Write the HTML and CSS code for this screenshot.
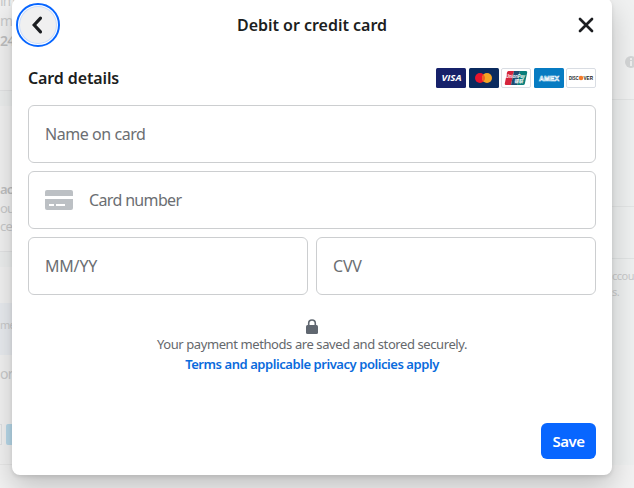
FILE: index.html
```html
<!DOCTYPE html>
<html lang="en">
<head>
    <meta charset="utf-8">
    <title>Debit or credit card</title>
    <meta name="viewport" content="width=device-width, initial-scale=1.0">
    <link rel="stylesheet" href="styles.css">
</head>
<body>
    <!-- Page behind the dialog -->
    <div class="page">
        <div class="page-left">
            <div class="summary">
                <div>im</div>
                <div>m</div>
                <b>24</b>
            </div>
            <div class="divider"></div>
            <div class="account">
                <b>ac</b>
                <div>ou</div>
                <div>ce</div>
            </div>
            <div class="divider"></div>
            <div class="note">me</div>
            <div class="method">or</div>
            <div class="page-logos"><i></i><i class="blue"></i></div>
        </div>
        <div class="page-right">
            <div class="info">
                <svg width="12" height="12" viewBox="0 0 12 12"><circle cx="6" cy="6" r="6" fill="#d3d5d6"/><path d="M5 5h2v5H5zM5 2h2v2H5z" fill="#eee"/></svg>
            </div>
            <div class="line-top"></div>
            <div class="line-bottom"></div>
            <div class="hint">ccou<br>s.</div>
        </div>
    </div>

    <div class="dialog">
        <div class="header">
            <button class="back" aria-label="Back">
                <svg width="36" height="36" viewBox="0 0 36 36" fill="none" stroke="#1c1e21" stroke-width="3.2" stroke-linecap="round"><path d="M20.5 11.2L14.2 18l6.300 6.800"/></svg>
            </button>
            <h1 class="title">Debit or credit card</h1>
            <button class="close" aria-label="Close">
                <svg width="16" height="16" viewBox="0 0 16 16" fill="none" stroke="#1c1e21" stroke-width="2.7" stroke-linecap="round"><path d="M2 2l12 12M14 2L2 14"/></svg>
            </button>
        </div>

        <div class="section-head">
            <h2 class="section-title">Card details</h2>
            <div class="brands">
                <svg width="30" height="20" viewBox="0 0 30 20">
                    <rect width="30" height="20" rx="1.5" fill="#16216a"/>
                    <text x="5.5" y="13" class="visa" textLength="20" lengthAdjust="spacingAndGlyphs">VISA</text>
                </svg>
                <svg width="30" height="20" viewBox="0 0 30 20">
                    <rect width="30" height="20" rx="1.5" fill="#0a2a5e"/>
                    <circle cx="11" cy="10" r="5" fill="#e9152d"/>
                    <circle cx="18" cy="10" r="5" fill="#f3a524"/>
                    <path d="M14.5 6.4a5 5 0 0 1 0 7.2a5 5 0 0 1 0-7.2z" fill="#ee6120"/>
                </svg>
                <svg width="30" height="20" viewBox="0 0 30 20">
                    <rect x=".5" y=".5" width="29" height="19" rx="1.5" fill="#fff" stroke="#d9dde3"/>
                    <path d="M7.5 3H13l-3 14H5q-1.5 0-1.2-1.5L6 4.5Q6.300 3 7.5 3z" fill="#d5243c"/>
                    <path d="M13 3h6l-3 14h-6z" fill="#1d4b70"/>
                    <path d="M19 3h6q1.5 0 1.2 1.5l-2.300 11Q23.600 17 22 17h-6z" fill="#087d7a"/>
                    <text x="5" y="10" class="union" textLength="19" lengthAdjust="spacingAndGlyphs">UnionPay</text>
                    <text x="13" y="15" class="union" textLength="9" lengthAdjust="spacingAndGlyphs">银联</text>
                </svg>
                <svg width="30" height="20" viewBox="0 0 30 20">
                    <rect width="30" height="20" rx="1.5" fill="#067bc2"/>
                    <text x="5" y="12.8" class="amex" textLength="20" lengthAdjust="spacingAndGlyphs">AMEX</text>
                </svg>
                <svg width="30" height="20" viewBox="0 0 30 20">
                    <rect x=".5" y=".5" width="29" height="19" rx="1.5" fill="#fff" stroke="#d9dde3"/>
                    <text x="3" y="12" class="discover" textLength="9.5" lengthAdjust="spacingAndGlyphs">DISC</text>
                    <circle cx="15" cy="10" r="2.3" fill="#f47a2a"/>
                    <text x="17.5" y="12" class="discover" textLength="9.5" lengthAdjust="spacingAndGlyphs">VER</text>
                </svg>
            </div>
        </div>

        <div class="fields">
            <div class="field wide"><span class="w-name">Name on card</span></div>
            <div class="field wide">
                <svg class="card-icon" width="28" height="20" viewBox="0 0 28 20" fill="#bcc0c4">
                    <path d="M2 0h24q2 0 2 2v4H0V2q0-2 2-2z"/>
                    <path d="M0 9h28v9q0 2-2 2H2q-2 0-2-2z"/>
                    <path d="M4 14h5v2H4zM11 14h9v2h-9z" fill="#fff"/>
                </svg>
                <span class="w-number">Card number</span>
            </div>
            <div class="field"><span class="w-date">MM/YY</span></div>
            <div class="field"><span class="w-date">CVV</span></div>
        </div>

        <div class="secure">
            <svg width="12" height="15" viewBox="0 0 12 15"><path d="M2.7 7V4.3a3.3 3.3 0 0 1 6.6 0V7" fill="none" stroke="#606770" stroke-width="1.6"/><rect y="6" width="12" height="9" rx="1.5" fill="#606770"/></svg>
            <p class="secure-text">Your payment methods are saved and stored securely.</p>
            <a class="terms">Terms and applicable privacy policies apply</a>
        </div>

        <div class="footer">
            <button class="save">Save</button>
        </div>
    </div>
</body>
</html>
```

FILE: styles.css
```css
* {
    box-sizing: border-box;
}

body {
    margin: 0;
    height: 488px;
    overflow: hidden;
    background: #f2f2f2;
    font-family: "Noto Sans", "Open Sans", sans-serif;
    color: #1c1e21;
}

h1, h2, p {
    margin: 0;
}

button {
    padding: 0;
    border: 0;
    font-family: inherit;
    cursor: pointer;
}

svg {
    display: block;
}

/* page behind */
.page {
    display: flex;
    justify-content: space-between;
    height: 488px;
    color: #c9cacb;
}

.page-left {
    width: 40px;
    font-size: 13px;
    letter-spacing: -0.8px;
}

.page-left b {
    color: #bfc0c1;
    font-weight: 600;
}

.summary {
    height: 90px;
    margin-top: -9px;
    margin-bottom: 9px;
    font-size: 14px;
    line-height: 20px;
}

.divider {
    height: 16px;
    border-top: 1px solid #e3e4e5;
    background: #edefef;
}

.account {
    height: 145px;
    padding-top: 73px;
    line-height: 18px;
}

.account b {
    display: block;
    line-height: 20px;
}

.note {
    height: 52px;
    margin-top: 36px;
    background: #e9ecf0;
    font-size: 11px;
    line-height: 44px;
}

.method {
    height: 69px;
    font-size: 14px;
    line-height: 38px;
}

.page-logos {
    display: flex;
    gap: 4px;
    height: 41px;
    border-bottom: 1px solid #e8e8e8;
}

.page-logos i {
    width: 2px;
    height: 21px;
    flex: none;
    border: 1px solid #dfe1e3;
    border-left: 0;
}

.page-logos .blue {
    width: 12px;
    border: 0;
    border-radius: 2px 0 0 2px;
    background: #b8d9ea;
}

.page-right {
    width: 22px;
    height: 465px;
    background: #eef0f0;
    font-size: 11px;
}

.info {
    height: 99px;
    padding: 56px 0 0 13px;
    overflow: hidden;
    background: #f0f1f1;
}

.line-top {
    height: 108px;
    border-top: 1px solid #e3e5e5;
    border-bottom: 1px solid #e3e5e5;
}

.line-bottom {
    height: 52px;
    border-bottom: 1px solid #e1e4e4;
}

.hint {
    padding-top: 9px;
    line-height: 16px;
    letter-spacing: -0.5px;
}

/* dialog */
.dialog {
    position: absolute;
    left: 12px;
    top: -2px;
    width: 600px;
    height: 477px;
    padding: 0 16px;
    border-radius: 8px;
    background: #fff;
    box-shadow: 0 12px 28px rgba(0, 0, 0, 0.2), 0 2px 4px rgba(0, 0, 0, 0.1);
}

.header {
    display: grid;
    grid-template-columns: 44px 1fr 44px;
    align-items: center;
    height: 54px;
    margin: 0 -12px;
}

.back {
    display: grid;
    place-items: center;
    width: 44px;
    height: 44px;
    border: 2px solid #0866ff;
    border-radius: 50%;
    background: #fff;
}

.back svg {
    border-radius: 50%;
    background: #f0f0f0;
    box-shadow: 0 0 0 1px #c9dcfb;
}

.title {
    font-size: 16px;
    font-weight: 600;
    letter-spacing: -0.02px;
    text-align: center;
    white-space: nowrap;
}

.close {
    justify-self: center;
    background: none;
}

.section-head {
    display: flex;
    align-items: center;
    justify-content: space-between;
    height: 53px;
    padding-bottom: 1px;
}

.section-title {
    font-size: 16px;
    font-weight: 600;
    letter-spacing: -0.12px;
}

.brands {
    display: flex;
    gap: 2.5px;
}

.visa {
    font: italic bold 9px "Open Sans", sans-serif;
    fill: #fff;
}

.union {
    font: italic bold 5px "Liberation Sans", "Noto Sans CJK SC", sans-serif;
    fill: #fff;
}

.amex {
    font: bold 7px "Liberation Sans", sans-serif;
    fill: none;
    stroke: #fff;
    stroke-width: 0.6px;
}

.discover {
    font: bold 5.5px "Liberation Sans", sans-serif;
    fill: #222;
}

.fields {
    display: grid;
    grid-template-columns: 1fr 1fr;
    gap: 8px;
}

.field {
    display: flex;
    align-items: center;
    height: 58px;
    padding: 0 16px;
    border: 1px solid #ccced0;
    border-radius: 6px;
    font-size: 16px;
    color: #6b6e72;
}

.wide {
    grid-column: span 2;
}

.card-icon {
    margin-right: 16px;
}

.w-name {
    letter-spacing: -0.45px;
}

.w-number {
    letter-spacing: -0.65px;
}

.w-date {
    letter-spacing: -0.2px;
}

.secure {
    display: flex;
    flex-direction: column;
    align-items: center;
    margin-top: 24px;
    font-size: 13px;
    line-height: 20px;
    white-space: nowrap;
}

.secure-text {
    color: #65686c;
    letter-spacing: -0.41px;
}

.terms {
    color: #0a6bdc;
    font-weight: 600;
    letter-spacing: -0.44px;
}

.footer {
    display: flex;
    justify-content: flex-end;
    margin-top: 49px;
}

.save {
    width: 55px;
    height: 36px;
    padding-bottom: 1px;
    border-radius: 6px;
    background: #0866ff;
    color: #fff;
    font-size: 15px;
    font-weight: 600;
    letter-spacing: -0.5px;
}
```
